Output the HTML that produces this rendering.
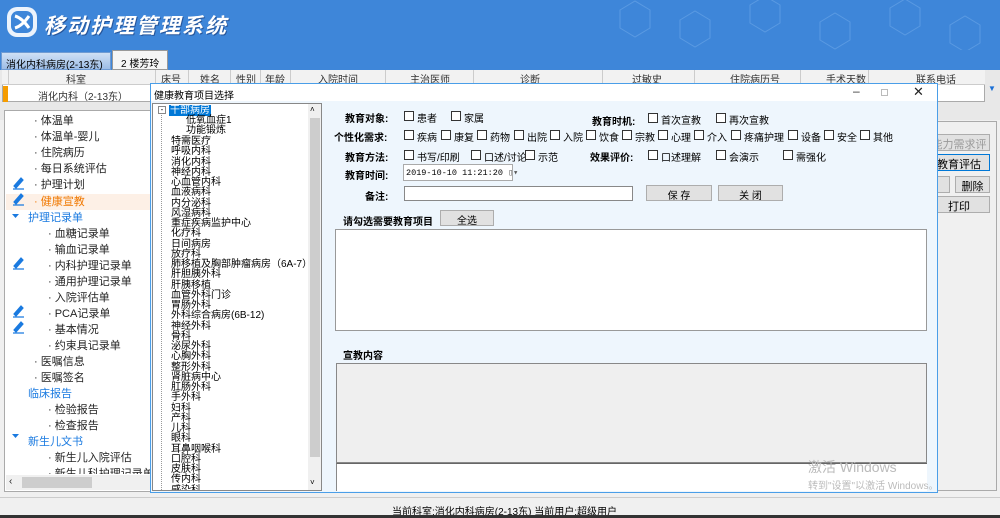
<!DOCTYPE html><html><head><meta charset="utf-8"><style>
*{margin:0;padding:0;box-sizing:border-box}
body{width:1000px;height:518px;position:relative;overflow:hidden;background:#f0f0f0;font-family:"Liberation Sans","Noto Sans CJK SC",sans-serif;font-size:11px;color:#000}
.a{position:absolute;white-space:nowrap}
.cb{position:absolute;width:10px;height:10px;border:1px solid #333;background:#fff}
.btn{position:absolute;border:1px solid #adadad;background:#e1e1e1;text-align:center;font-size:11px}
.b{font-weight:bold}
.tr div{height:10.25px;line-height:10.25px}
</style></head><body>
<!-- header -->
<div class="a" style="left:0;top:0;width:1000px;height:52px;background:#3e86d9"></div>
<svg class="a" style="left:0;top:0" width="1000" height="52"><g stroke="#5a9ae2" fill="none" stroke-width="1">
<path d="M620 10l15-9 15 9v18l-15 9-15-9z M680 20l15-9 15 9v18l-15 9-15-9z M750 5l15-9 15 9v18l-15 9-15-9z M820 22l15-9 15 9v18l-15 9-15-9z M890 8l15-9 15 9v18l-15 9-15-9z M950 25l15-9 15 9v18l-15 9-15-9z"/></g>
<rect x="7" y="7" width="30" height="30" rx="10" fill="#fff" opacity=".9"/><rect x="11" y="11" width="22" height="22" rx="7" fill="#3e86d9"/><path d="M15 16q7 2 14 12M15 28q7-2 14-12" stroke="#fff" stroke-width="3" fill="none"/></svg>
<div class="a b" style="left:44px;top:10px;font-size:21px;color:#fff;letter-spacing:2px;font-style:italic;text-shadow:1px 1px 0 #27569b">移动护理管理系统</div>
<!-- tabs -->
<div class="a" style="left:0;top:50px;width:1000px;height:20px;background:#3e86d9"></div>
<div class="a" style="left:1px;top:52px;width:110px;height:18px;background:linear-gradient(#cfe0f5,#9dbde6);border:1px solid #6f9bd3;font-size:10px;padding:3px 4px">消化内科病房(2-13东)</div>
<div class="a" style="left:112px;top:50px;width:56px;height:20px;background:#f5f5f5;border:1px solid #999;font-size:10px;padding:4px 8px">2 楼芳玲</div>
<!-- table -->
<div class="a" style="left:0;top:70px;width:1000px;height:50px;background:#e8e8e8"></div>
<div class="a" style="left:2px;top:70px;width:983px;height:32px;background:#fff;border:1px solid #aaa"></div>
<div class="a" style="left:2px;top:70px;width:983px;height:15px;background:#f2f2f2;border-bottom:1px solid #ccc;font-size:10px;color:#333">
<span class="a" style="left:6px;width:1px;height:15px;background:#ccc"></span>
<span class="a" style="left:64px;top:1px">科室</span><span class="a" style="left:153px;height:15px;border-left:1px solid #ccc"></span>
<span class="a" style="left:159px;top:1px">床号</span><span class="a" style="left:186px;height:15px;border-left:1px solid #ccc"></span>
<span class="a" style="left:198px;top:1px">姓名</span><span class="a" style="left:228px;height:15px;border-left:1px solid #ccc"></span>
<span class="a" style="left:234px;top:1px">性别</span><span class="a" style="left:258px;height:15px;border-left:1px solid #ccc"></span>
<span class="a" style="left:263px;top:1px">年龄</span><span class="a" style="left:288px;height:15px;border-left:1px solid #ccc"></span>
<span class="a" style="left:316px;top:1px">入院时间</span><span class="a" style="left:383px;height:15px;border-left:1px solid #ccc"></span>
<span class="a" style="left:408px;top:1px">主治医师</span><span class="a" style="left:471px;height:15px;border-left:1px solid #ccc"></span>
<span class="a" style="left:518px;top:1px">诊断</span><span class="a" style="left:600px;height:15px;border-left:1px solid #ccc"></span>
<span class="a" style="left:630px;top:1px">过敏史</span><span class="a" style="left:692px;height:15px;border-left:1px solid #ccc"></span>
<span class="a" style="left:728px;top:1px">住院病历号</span><span class="a" style="left:798px;height:15px;border-left:1px solid #ccc"></span>
<span class="a" style="left:824px;top:1px">手术天数</span><span class="a" style="left:866px;height:15px;border-left:1px solid #ccc"></span>
<span class="a" style="left:914px;top:1px">联系电话</span></div>
<div class="a" style="left:3px;top:86px;width:5px;height:16px;background:#f59c00"></div>
<div class="a" style="left:38px;top:88px;font-size:10px;color:#333">消化内科（2-13东）</div>
<div class="a" style="left:988px;top:84px;font-size:8px;color:#1a6fd6">▼</div>
<!-- left tree -->
<div class="a" style="left:4px;top:110px;width:150px;height:382px;background:#fff;border:1px solid #aaa;font-size:11px;line-height:16px;color:#222">
<div class="a" style="left:29px;top:2px">· 体温单</div>
<div class="a" style="left:29px;top:18px">· 体温单-婴儿</div>
<div class="a" style="left:29px;top:34px">· 住院病历</div>
<div class="a" style="left:29px;top:50px">· 每日系统评估</div>
<div class="a" style="left:29px;top:66px">· 护理计划</div>
<div class="a" style="left:1px;top:83px;width:147px;height:16px;background:#fdf0e6"></div>
<div class="a" style="left:29px;top:83px;color:#f07800">· 健康宣教</div>
<div class="a" style="left:23px;top:99px;color:#1a7ae0">护理记录单</div>
<div class="a" style="left:43px;top:115px">· 血糖记录单</div>
<div class="a" style="left:43px;top:131px">· 输血记录单</div>
<div class="a" style="left:43px;top:147px">· 内科护理记录单</div>
<div class="a" style="left:43px;top:163px">· 通用护理记录单</div>
<div class="a" style="left:43px;top:179px">· 入院评估单</div>
<div class="a" style="left:43px;top:195px">· PCA记录单</div>
<div class="a" style="left:43px;top:211px">· 基本情况</div>
<div class="a" style="left:43px;top:227px">· 约束具记录单</div>
<div class="a" style="left:29px;top:243px">· 医嘱信息</div>
<div class="a" style="left:29px;top:259px">· 医嘱签名</div>
<div class="a" style="left:23px;top:275px;color:#1a7ae0">临床报告</div>
<div class="a" style="left:43px;top:291px">· 检验报告</div>
<div class="a" style="left:43px;top:307px">· 检查报告</div>
<div class="a" style="left:23px;top:323px;color:#1a7ae0">新生儿文书</div>
<div class="a" style="left:43px;top:339px">· 新生儿入院评估</div>
<div class="a" style="left:43px;top:355px;height:8px;overflow:hidden">· 新生儿科护理记录单</div>
<div class="a" style="left:1px;top:364px;width:146px;height:15px;background:#f0f0f0"></div>
<div class="a" style="left:17px;top:366px;width:70px;height:11px;background:#cdcdcd"></div>
<div class="a" style="left:4px;top:363px;font-size:10px">‹</div>
</div>
<svg class="a" style="left:10px;top:110px" width="20" height="280" fill="#1a7ae0"><g font-size="11">
<path d="M4 76l7-8 2 2-7 8z M3 79h11" stroke="#1a7ae0" stroke-width="1.2"/>
<path d="M4 92l7-8 2 2-7 8z M3 95h11" stroke="#1a7ae0" stroke-width="1.2"/>
<path d="M4 156l7-8 2 2-7 8z M3 159h11" stroke="#1a7ae0" stroke-width="1.2"/>
<path d="M4 204l7-8 2 2-7 8z M3 207h11" stroke="#1a7ae0" stroke-width="1.2"/>
<path d="M4 220l7-8 2 2-7 8z M3 223h11" stroke="#1a7ae0" stroke-width="1.2"/>
<path d="M2 104h7l-3.5 4z M2 280h7l-3.5 4z"/></g></svg>
<svg class="a" style="left:10px;top:430px" width="10" height="10"><path d="M2 4h7l-3.5 4z" fill="#1a7ae0"/></svg>
<!-- right background panel -->
<div class="a" style="left:930px;top:121px;width:67px;height:370px;border:1px solid #aaa;background:#f0f0f0"></div>
<div class="btn" style="left:928px;top:134px;width:62px;height:17px;color:#999;padding-top:1px">能力需求评估</div>
<div class="btn" style="left:928px;top:154px;width:62px;height:17px;border-color:#0078d7;padding-top:1px">教育评估</div>
<div class="btn" style="left:928px;top:176px;width:22px;height:17px"></div>
<div class="btn" style="left:955px;top:176px;width:35px;height:17px;padding-top:1px">删除</div>
<div class="btn" style="left:928px;top:196px;width:62px;height:17px;padding-top:1px">打印</div>
<!-- status -->
<div class="a" style="left:0;top:497px;width:1000px;height:1px;background:#ccc"></div>
<div class="a" style="left:392px;top:503px;font-size:10px">当前科室:消化内科病房(2-13东)  当前用户:超级用户</div>
<div class="a" style="left:0;top:515px;width:1000px;height:3px;background:#333"></div>
<!-- dialog -->
<div class="a" style="left:150px;top:83px;width:788px;height:410px;background:#eef6fd;border:1px solid #4a9ee8"></div>
<div class="a" style="left:151px;top:84px;width:786px;height:17px;background:#fff"></div>
<div class="a" style="left:154px;top:87px;font-size:10px">健康教育项目选择</div>
<div class="a" style="left:853px;top:84px;font-size:12px;color:#333">–</div>
<div class="a" style="left:881px;top:89px;width:7px;height:7px;border:1px solid #bbb"></div>
<div class="a" style="left:913px;top:84px;font-size:13px;color:#222">✕</div>
<!-- dialog tree -->
<div class="a" style="left:152px;top:103px;width:170px;height:388px;background:#fff;border:1px solid #888;overflow:hidden;font-size:10px">
<div class="a" style="left:155px;top:0;width:13px;height:386px;background:#f0f0f0"></div>
<div class="a" style="left:157px;top:14px;width:10px;height:339px;background:#cdcdcd"></div>
<div class="a" style="left:157px;top:1px;font-size:8px">˄</div><div class="a" style="left:157px;top:374px;font-size:8px">˅</div>
<div class="a" style="left:8px;top:6px;width:1px;height:382px;border-left:1px dotted #999"></div>
<div class="a" style="left:5px;top:2px;width:8px;height:8px;border:1px solid #888;background:#fff;font-size:8px;line-height:6px;text-align:center">-</div>
<div class="a" style="left:16px;top:1px;height:11px;line-height:11px;background:#0078d7;color:#fff;padding:0 1px">干部病房</div>
<div class="a" style="left:33px;top:12px;line-height:10px">低氧血症1</div>
<div class="a" style="left:33px;top:22px;line-height:10px">功能锻炼</div>
<div class="a tr" style="left:18px;top:33px">
<div>特需医疗</div><div>呼吸内科</div><div>消化内科</div><div>神经内科</div><div>心血管内科</div><div>血液病科</div><div>内分泌科</div><div>风湿病科</div><div>重症疾病监护中心</div><div>化疗科</div><div>日间病房</div><div>放疗科</div><div>肺移植及胸部肿瘤病房（6A-7）</div><div>肝胆胰外科</div><div>肝胰移植</div><div>血管外科门诊</div><div>胃肠外科</div><div>外科综合病房(6B-12)</div><div>神经外科</div><div>骨科</div><div>泌尿外科</div><div>心胸外科</div><div>整形外科</div><div>肾脏病中心</div><div>肛肠外科</div><div>手外科</div><div>妇科</div><div>产科</div><div>儿科</div><div>眼科</div><div>耳鼻咽喉科</div><div>口腔科</div><div>皮肤科</div><div>传内科</div><div>感染科</div><div>肿瘤外科</div>
</div>
</div>
<!-- form -->
<div class="a b" style="left:345px;top:110px;font-size:10px">教育对象:</div>
<div class="cb" style="left:404px;top:111px"></div><div class="a" style="left:417px;top:110px;font-size:10px">患者</div>
<div class="cb" style="left:451px;top:111px"></div><div class="a" style="left:464px;top:110px;font-size:10px">家属</div>
<div class="a b" style="left:592px;top:113px;font-size:10px">教育时机:</div>
<div class="cb" style="left:648px;top:113px"></div><div class="a" style="left:661px;top:112px;font-size:10px">首次宣教</div>
<div class="cb" style="left:716px;top:113px"></div><div class="a" style="left:729px;top:112px;font-size:10px">再次宣教</div>
<div class="a b" style="left:334px;top:129px;font-size:10px">个性化需求:</div>
<div class="a" style="left:404px;top:129px;font-size:10px;word-spacing:0">
<span class="cb" style="left:0;top:1px"></span><span class="a" style="left:13px">疾病</span>
<span class="cb" style="left:37px;top:1px"></span><span class="a" style="left:50px">康复</span>
<span class="cb" style="left:73px;top:1px"></span><span class="a" style="left:86px">药物</span>
<span class="cb" style="left:110px;top:1px"></span><span class="a" style="left:123px">出院</span>
<span class="cb" style="left:146px;top:1px"></span><span class="a" style="left:159px">入院</span>
<span class="cb" style="left:182px;top:1px"></span><span class="a" style="left:195px">饮食</span>
<span class="cb" style="left:218px;top:1px"></span><span class="a" style="left:231px">宗教</span>
<span class="cb" style="left:254px;top:1px"></span><span class="a" style="left:267px">心理</span>
<span class="cb" style="left:290px;top:1px"></span><span class="a" style="left:303px">介入</span>
<span class="cb" style="left:327px;top:1px"></span><span class="a" style="left:340px">疼痛护理</span>
<span class="cb" style="left:384px;top:1px"></span><span class="a" style="left:397px">设备</span>
<span class="cb" style="left:420px;top:1px"></span><span class="a" style="left:433px">安全</span>
<span class="cb" style="left:456px;top:1px"></span><span class="a" style="left:469px">其他</span></div>
<div class="a b" style="left:345px;top:149px;font-size:10px">教育方法:</div>
<div class="cb" style="left:404px;top:150px"></div><div class="a" style="left:417px;top:149px;font-size:10px">书写/印刷</div>
<div class="cb" style="left:471px;top:150px"></div><div class="a" style="left:484px;top:149px;font-size:10px">口述/讨论</div>
<div class="cb" style="left:525px;top:150px"></div><div class="a" style="left:538px;top:149px;font-size:10px">示范</div>
<div class="a b" style="left:590px;top:149px;font-size:10px">效果评价:</div>
<div class="cb" style="left:648px;top:150px"></div><div class="a" style="left:661px;top:149px;font-size:10px">口述理解</div>
<div class="cb" style="left:716px;top:150px"></div><div class="a" style="left:729px;top:149px;font-size:10px">会演示</div>
<div class="cb" style="left:783px;top:150px"></div><div class="a" style="left:796px;top:149px;font-size:10px">需强化</div>
<div class="a b" style="left:345px;top:167px;font-size:10px">教育时间:</div>
<div class="a" style="left:403px;top:164px;width:110px;height:17px;background:#fff;border:1px solid #aaa;font-size:8.5px;padding:3px 2px;font-family:'Liberation Mono',monospace">2019-10-10 11:21:20 <span style="color:#555">▯▾</span></div>
<div class="a b" style="left:365px;top:188px;font-size:10px">备注:</div>
<div class="a" style="left:404px;top:186px;width:229px;height:15px;background:#fff;border:1px solid #888"></div>
<div class="btn" style="left:646px;top:185px;width:66px;height:16px;padding-top:1px;font-size:10px">保 存</div>
<div class="btn" style="left:718px;top:185px;width:65px;height:16px;padding-top:1px;font-size:10px">关 闭</div>
<div class="a b" style="left:343px;top:213px;font-size:10px">请勾选需要教育项目</div>
<div class="btn" style="left:440px;top:210px;width:54px;height:16px;padding-top:1px;font-size:10px">全选</div>
<div class="a" style="left:335px;top:229px;width:592px;height:102px;background:#fff;border:1px solid #999"></div>
<div class="a b" style="left:343px;top:347px;font-size:10px">宣教内容</div>
<div class="a" style="left:336px;top:363px;width:591px;height:100px;background:#efefef;border:1px solid #888"></div>
<div class="a" style="left:336px;top:463px;width:591px;height:28px;background:#fff;border-top:1px solid #666;border-left:1px solid #888"></div>
<div class="a" style="left:808px;top:457px;font-size:14px;color:#bbb">激活 Windows</div>
<div class="a" style="left:808px;top:477px;font-size:10px;color:#bbb">转到"设置"以激活 Windows。</div>
</body></html>
